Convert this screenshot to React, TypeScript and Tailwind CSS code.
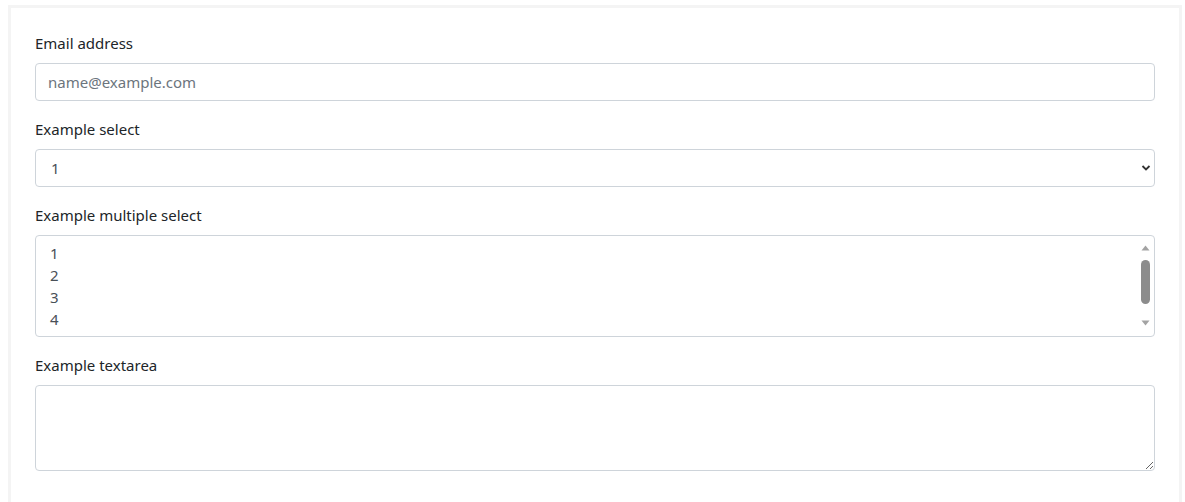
import React from "react";

const font = { fontFamily: '"Noto Sans", "Open Sans", sans-serif' };

function Label({ children }: { children: React.ReactNode }) {
  return (
    <label className="block mb-2 text-[15px] leading-6 text-[#212529]">{children}</label>
  );
}

export default function App() {
  return (
    <div className="bg-white min-h-screen pt-[5px] pl-2" style={font}>
      <div className="w-[1174px] border-[3px] border-[#f4f4f4] px-6 pt-[23px] pb-12 bg-white">
        <div className="mb-4">
          <Label>Email address</Label>
          <input
            type="email"
            placeholder="name@example.com"
            className="block w-full h-[38px] px-3 border border-[#ced4da] rounded-[4px] text-[15px] text-[#495057] placeholder:text-[#6c757d] outline-none"
          />
        </div>
        <div className="mb-4">
          <Label>Example select</Label>
          <div className="relative">
            <select className="block w-full h-[38px] pl-[15px] pr-8 border border-[#ced4da] rounded-[4px] text-[15px] text-[#495057] bg-white appearance-none outline-none">
              <option>1</option>
              <option>2</option>
              <option>3</option>
              <option>4</option>
              <option>5</option>
            </select>
            <svg
              className="absolute right-[4px] top-[15px] pointer-events-none"
              width="10"
              height="8"
              viewBox="0 0 10 8"
            >
              <path d="M1.5 2 L5 5.5 L8.5 2" fill="none" stroke="#333" strokeWidth="1.8" />
            </svg>
          </div>
        </div>
        <div className="mb-4">
          <Label>Example multiple select</Label>
          <div className="relative w-full h-[102px] border border-[#ced4da] rounded-[4px] bg-white">
            <ul className="pl-[14px] pt-[6px] text-[15px] leading-[22px] text-[#495057]">
              <li>1</li>
              <li>2</li>
              <li>3</li>
              <li>4</li>
            </ul>
            <div className="absolute right-[2px] top-[2px] bottom-[2px] w-[13px]">
              <svg className="absolute left-[2px] top-[7px]" width="9" height="6" viewBox="0 0 9 6">
                <path d="M0.5 5.5 L4.5 0.5 L8.5 5.5 Z" fill="#a3a3a3" />
              </svg>
              <div className="absolute left-[2px] top-[22px] w-[9px] h-[44px] rounded-full bg-[#8c8c8c]" />
              <svg className="absolute left-[2px] bottom-[8px]" width="9" height="6" viewBox="0 0 9 6">
                <path d="M0.5 0.5 L4.5 5.5 L8.5 0.5 Z" fill="#a3a3a3" />
              </svg>
            </div>
          </div>
        </div>
        <div>
          <Label>Example textarea</Label>
          <textarea
            rows={3}
            className="block w-full h-[86px] px-3 py-[6px] border border-[#ced4da] rounded-[4px] text-[15px] text-[#495057] outline-none resize-y"
          />
        </div>
      </div>
    </div>
  );
}
